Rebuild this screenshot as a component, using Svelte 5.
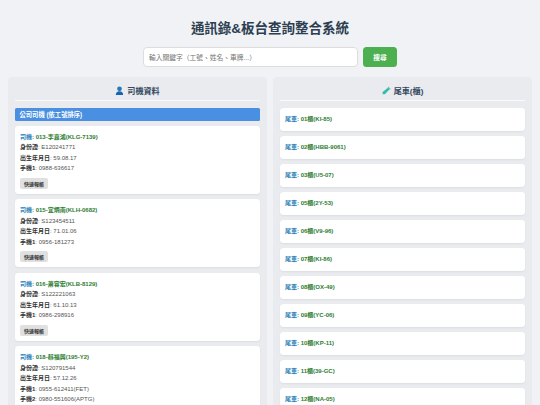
<script>
  const drivers = [
    { name: "013-李嘉鴻(KLG-7139)", id: "E120241771", birth: "59.08.17", phones: ["0988-636617"] },
    { name: "015-宜炳南(KLH-0682)", id: "S123454511", birth: "71.01.06", phones: ["0956-181273"] },
    { name: "016-蕭容宏(KLB-8129)", id: "S122221063", birth: "61.10.13", phones: ["0986-298916"] },
    { name: "018-蔡福興(195-Y2)", id: "S120791544", birth: "57.12.26", phones: ["0955-612411(FET)", "0980-551606(APTG)"] },
  ];

  const trailers = [
    "01櫃(KI-85)", "02櫃(HBB-9061)", "03櫃(U5-07)", "05櫃(2Y-53)", "06櫃(V9-96)", "07櫃(KI-86)",
    "08櫃(OX-49)", "09櫃(YC-06)", "10櫃(KP-11)", "11櫃(39-GC)", "12櫃(NA-05)",
  ];

  let query = $state("");
</script>

<div class="page">
  <h1>通訊錄&amp;板台查詢整合系統</h1>

  <form class="search" onsubmit={(e) => e.preventDefault()}>
    <input type="text" bind:value={query} placeholder="輸入關鍵字（工號、姓名、車牌...）" />
    <button type="submit">搜尋</button>
  </form>

  <div class="columns">
    <section class="panel">
      <h2>
        <svg class="icon" viewBox="0 0 16 16" aria-hidden="true">
          <circle cx="8" cy="5" r="4.2" fill="#2a78b8" />
          <path d="M1.500 16c0-4.500 2.500-6.500 6.500-6.500s6.500 2 6.500 6.500z" fill="#1565b0" />
        </svg>
        司機資料
      </h2>
      <div class="group">公司司機 (依工號排序)</div>
      {#each drivers as d}
        <article class="card">
          <p class="head"><span class="label">司機:</span> <span class="value">{d.name}</span></p>
          <p><b>身份證</b>: {d.id}</p>
          <p><b>出生年月日</b>: {d.birth}</p>
          {#each d.phones as phone, i}
            <p><b>手機{i + 1}</b>: {phone}</p>
          {/each}
          <button class="quick" type="button">快速報帳</button>
        </article>
      {/each}
    </section>

    <section class="panel">
      <h2>
        <svg class="icon" viewBox="0 0 16 16" aria-hidden="true">
          <path d="M11 2.500 14 5.500 5.500 14c-1 1-3 1.200-4 .2s-.8-3 .2-4z" fill="#2fbfa8" />
          <path d="M10.500 1.500l4.500 4.500" stroke="#8fb5aa" stroke-width="1.800" fill="none" />
        </svg>
        尾車(櫃)
      </h2>
      {#each trailers as t}
        <article class="card trailer">
          <p class="head"><span class="label">尾車:</span> <span class="value">{t}</span></p>
        </article>
      {/each}
    </section>
  </div>
</div>

<style>
  :global(body) {
    margin: 0;
    background: #f0f2f5;
    font-family: "Liberation Sans", "Noto Sans CJK TC", sans-serif;
    color: #333;
  }

  .page {
    height: 405px;
    overflow: hidden;
    padding: 0 8px;
    box-sizing: border-box;
  }

  h1 {
    margin: 0;
    padding-top: 20px;
    height: 47px;
    box-sizing: border-box;
    font-size: 13.5px;
    line-height: 17px;
    font-weight: 700;
    text-align: center;
    color: #2c3e50;
  }

  .search {
    display: flex;
    justify-content: center;
    gap: 5px;
    height: 20px;
    margin-bottom: 10px;
  }

  .search input {
    width: 215px;
    box-sizing: border-box;
    padding: 0 5px;
    border: 1px solid #ddd;
    border-radius: 4px;
    background: #fff;
    font: 6.750px "Liberation Sans", "Noto Sans CJK TC", sans-serif;
  }

  .search input::placeholder {
    color: #757575;
  }

  .search button {
    width: 34px;
    border: none;
    border-radius: 3.500px;
    background: #4caf50;
    color: #fff;
    font: 700 6.750px "Liberation Sans", "Noto Sans CJK TC", sans-serif;
  }

  .columns {
    display: flex;
    gap: 6px;
    align-items: flex-start;
  }

  .panel {
    flex: 1;
    min-width: 0;
    padding: 5px 7px 0;
    background: #e9ebef;
    border-radius: 4px;
  }

  h2 {
    display: flex;
    justify-content: center;
    align-items: center;
    gap: 3px;
    margin: 0 0 6.500px;
    height: 16px;
    padding-bottom: 2px;
    border-bottom: 1.500px solid #f8f9fa;
    font-size: 8.100px;
    font-weight: 700;
    color: #34495e;
  }

  .icon {
    width: 9px;
    height: 9px;
  }

  .group {
    height: 13px;
    margin-bottom: 5px;
    padding: 0 4.500px;
    border-radius: 1.500px;
    background: #4a90e2;
    color: #fff;
    font-size: 6.300px;
    font-weight: 700;
    line-height: 13px;
  }

  .card {
    margin-bottom: 5.500px;
    padding: 6px 5px 5px;
    background: #fff;
    border-radius: 3.500px;
    box-shadow: 0 1px 2px rgba(0, 0, 0, 0.06);
  }

  .card.trailer {
    margin-bottom: 5px;
    padding: 6px 5px 6.500px;
  }

  p {
    margin: 0;
    font-size: 6px;
    line-height: 10.500px;
    color: #555;
  }

  p b {
    color: #333;
  }

  .head {
    font-weight: 700;
  }

  .label {
    color: #2980b9;
  }

  .value {
    color: #2e7d32;
  }

  .quick {
    display: block;
    margin-top: 4px;
    height: 11px;
    padding: 0 4px;
    border: none;
    border-radius: 2px;
    background: #e0e0e0;
    color: #333;
    font: 700 5px "Liberation Sans", "Noto Sans CJK TC", sans-serif;
  }
</style>
